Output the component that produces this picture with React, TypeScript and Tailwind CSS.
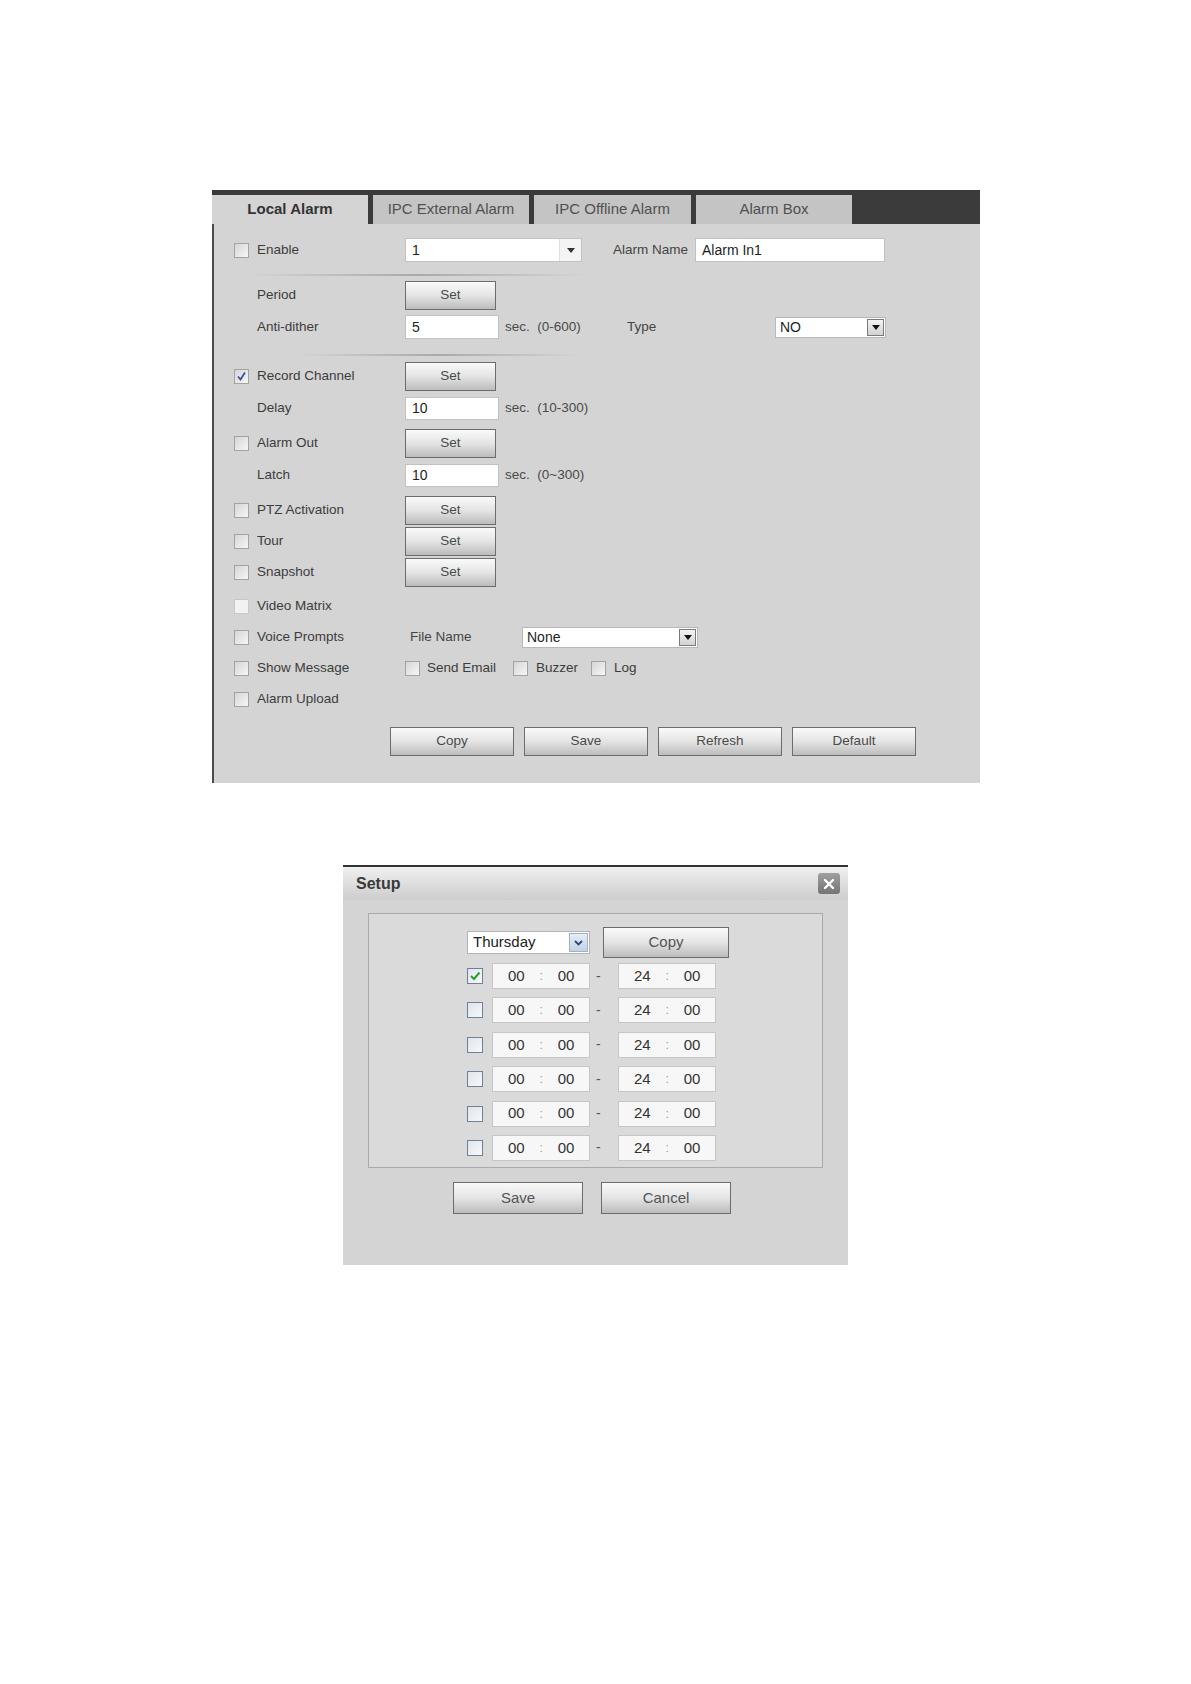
import React from 'react';

const font = { fontFamily: '"Liberation Sans", Arial, sans-serif' };

const Check: React.FC<{ checked?: boolean; light?: boolean }> = ({ checked, light }) => (
  <span
    className={`flex h-[15px] w-[15px] shrink-0 items-center justify-center border ${
      light ? 'border-[#c8c8c8] bg-[#f2f2f2]' : 'border-[#a3a3a3] bg-linear-to-br from-[#d6d6d6] to-[#f6f6f6]'
    }`}
  >
    {checked && (
      <svg width="11" height="11" viewBox="0 0 11 11">
        <path d="M2 5.5 L4.5 8.5 L9 1.5" fill="none" stroke="#3b4c9c" strokeWidth="1.7" />
      </svg>
    )}
  </span>
);

const Btn: React.FC<{ label: string; className?: string }> = ({ label, className = '' }) => (
  <div
    className={`flex items-center justify-center border border-[#6c6c6c] bg-linear-to-b from-[#fafafa] via-[#e4e4e4] to-[#bcbcbc] text-[#4a4a4a] ${className}`}
  >
    {label}
  </div>
);

const Field: React.FC<{ value: string; className?: string }> = ({ value, className = '' }) => (
  <div className={`flex items-center border border-[#c2c2c2] bg-white pl-[6px] text-[14px] text-[#1e1e1e] ${className}`}>
    {value}
  </div>
);

// classic select with a boxed arrow button at the right
const BoxSelect: React.FC<{ value: string; className?: string }> = ({ value, className = '' }) => (
  <div className={`flex items-center justify-between border border-[#b8b8b8] bg-white pl-[4px] text-[14px] text-[#1e1e1e] ${className}`}>
    <span>{value}</span>
    <span className="mr-px flex h-[17px] w-[17px] items-center justify-center border border-[#7a7a7a] bg-linear-to-b from-[#f4f4f4] to-[#d2d2d2]">
      <svg width="8" height="5" viewBox="0 0 8 5">
        <polygon points="0,0 8,0 4,5" fill="#111" />
      </svg>
    </span>
  </div>
);

const Label: React.FC<{ text: string; check?: boolean; checked?: boolean; light?: boolean }> = ({ text, check, checked, light }) => (
  <div className="flex w-[171px] shrink-0 items-center">
    {check ? <Check checked={checked} light={light} /> : <span className="w-[15px]" />}
    <span className="ml-[8px]">{text}</span>
  </div>
);

const Sec: React.FC<{ text: string; className?: string }> = ({ text, className = '' }) => (
  <span className={`ml-[6px] whitespace-pre text-[#4a4a4a] ${className}`}>{text}</span>
);

const tabs = [
  { name: 'Local Alarm', w: 'w-[156px]', active: true },
  { name: 'IPC External Alarm', w: 'w-[156px]' },
  { name: 'IPC Offline Alarm', w: 'w-[157px]' },
  { name: 'Alarm Box', w: 'w-[156px]' },
];

const TimeBox: React.FC<{ h: string }> = ({ h }) => (
  <div className="flex h-[26px] w-[98px] items-center border border-[#c6c6c6] bg-[#f7f7f7] pl-[15px] text-[15px] text-[#333]">
    <span>{h}</span>
    <span className="w-[33px] text-center text-[12px] text-[#9a9a9a]">:</span>
    <span>00</span>
  </div>
);

export default function App() {
  return (
    <div className="h-[1684px] w-[1191px] bg-white pt-[190px]" style={font}>
      {/* main alarm panel */}
      <div className="ml-[212px] w-[768px]">
        <div className="flex h-[34px] gap-[5px] bg-[#3b3b3b] pt-[5px]">
          {tabs.map((t) => (
            <div
              key={t.name}
              className={`flex h-[29px] items-center justify-center text-[15px] ${t.w} ${
                t.active ? 'bg-[#d4d4d4] font-bold text-[#333]' : 'bg-[#c4c4c4] text-[#505050]'
              }`}
            >
              {t.name}
            </div>
          ))}
        </div>

        <div className="h-[559px] border-l-2 border-[#4a4a4a] bg-[#d4d4d4] pl-[20px] text-[13.5px] text-[#3c3c3c]">
          <div className="h-[11px]" />
          <div className="flex h-[30px] items-center">
            <Label text="Enable" check />
            <div className="flex h-[24px] w-[177px] items-center justify-between border border-[#c2c2c2] bg-white pl-[6px] text-[14px] text-[#1e1e1e]">
              <span>1</span>
              <span className="flex h-full w-[22px] items-center justify-center border-l border-[#e0e0e0] bg-[#f4f4f4]">
                <svg width="8" height="5" viewBox="0 0 8 5">
                  <polygon points="0,0 8,0 4,5" fill="#333" />
                </svg>
              </span>
            </div>
            <span className="ml-[31px] w-[82px] text-[#444]">Alarm Name</span>
            <Field value="Alarm In1" className="h-[24px] w-[190px]" />
          </div>

          <div className="ml-[13px] mt-[9px] h-[2px] w-[340px] bg-linear-to-r from-transparent via-[#a9a9a9] to-transparent" />

          <div className="mt-[4px] flex h-[30px] items-center">
            <Label text="Period" />
            <Btn label="Set" className="h-[29px] w-[91px]" />
          </div>
          <div className="mt-[2px] flex h-[30px] items-center">
            <Label text="Anti-dither" />
            <Field value="5" className="h-[24px] w-[94px]" />
            <Sec text="sec.  (0-600)" className="w-[122px]" />
            <span className="w-[148px] text-[#444]">Type</span>
            <BoxSelect value="NO" className="h-[21px] w-[111px]" />
          </div>

          <div className="ml-[64px] mt-[12px] h-[2px] w-[280px] bg-linear-to-r from-transparent via-[#a9a9a9] to-transparent" />

          <div className="mt-[5px] flex h-[30px] items-center">
            <Label text="Record Channel" check checked />
            <Btn label="Set" className="h-[29px] w-[91px]" />
          </div>
          <div className="mt-[2px] flex h-[30px] items-center">
            <Label text="Delay" />
            <Field value="10" className="h-[23px] w-[94px]" />
            <Sec text="sec.  (10-300)" />
          </div>
          <div className="mt-[5px] flex h-[30px] items-center">
            <Label text="Alarm Out" check />
            <Btn label="Set" className="h-[29px] w-[91px]" />
          </div>
          <div className="mt-[2px] flex h-[30px] items-center">
            <Label text="Latch" />
            <Field value="10" className="h-[23px] w-[94px]" />
            <Sec text="sec.  (0~300)" />
          </div>
          <div className="mt-[5px] flex h-[30px] items-center">
            <Label text="PTZ Activation" check />
            <Btn label="Set" className="h-[29px] w-[91px]" />
          </div>
          <div className="mt-[1px] flex h-[30px] items-center">
            <Label text="Tour" check />
            <Btn label="Set" className="h-[29px] w-[91px]" />
          </div>
          <div className="mt-[1px] flex h-[30px] items-center">
            <Label text="Snapshot" check />
            <Btn label="Set" className="h-[29px] w-[91px]" />
          </div>
          <div className="mt-[4px] flex h-[30px] items-center">
            <Label text="Video Matrix" check light />
          </div>
          <div className="mt-[1px] flex h-[30px] items-center">
            <Label text="Voice Prompts" check />
            <span className="w-[117px] pl-[5px] text-[#444]">File Name</span>
            <BoxSelect value="None" className="h-[21px] w-[176px]" />
          </div>
          <div className="mt-[1px] flex h-[30px] items-center">
            <Label text="Show Message" check />
            <div className="flex w-[108px] items-center">
              <Check />
              <span className="ml-[7px]">Send Email</span>
            </div>
            <div className="flex w-[78px] items-center">
              <Check />
              <span className="ml-[8px]">Buzzer</span>
            </div>
            <div className="flex items-center">
              <Check />
              <span className="ml-[8px]">Log</span>
            </div>
          </div>
          <div className="mt-[1px] flex h-[30px] items-center">
            <Label text="Alarm Upload" check />
          </div>

          <div className="ml-[156px] mt-[13px] flex gap-[10px]">
            {['Copy', 'Save', 'Refresh', 'Default'].map((b) => (
              <Btn key={b} label={b} className="h-[29px] w-[124px]" />
            ))}
          </div>
        </div>
      </div>

      {/* Setup dialog */}
      <div className="ml-[343px] mt-[82px] h-[400px] w-[505px] border-t-2 border-[#333] bg-[#d4d4d4]">
        <div className="flex h-[33px] items-center justify-between bg-linear-to-b from-[#f0f0f0] to-[#cdcdcd] pl-[13px] pr-[8px]">
          <span className="text-[16px] font-bold text-[#3a3a3a]">Setup</span>
          <span className="flex h-[21px] w-[22px] items-center justify-center rounded-[3px] bg-linear-to-b from-[#a0a0a0] to-[#747474]">
            <svg width="12" height="12" viewBox="0 0 12 12">
              <path d="M2 2 L10 10 M10 2 L2 10" stroke="#fff" strokeWidth="2.4" strokeLinecap="round" />
            </svg>
          </span>
        </div>

        <div className="ml-[25px] mt-[13px] h-[255px] w-[455px] border border-[#aaaaaa] bg-[#dadada] pl-[98px] pt-[13px]">
          <div className="flex h-[31px] items-center">
            <div className="flex h-[23px] w-[123px] items-center justify-between border border-[#b5b5b5] bg-white pl-[5px] pr-[1px] text-[15px] text-[#222]">
              <span>Thursday</span>
              <span className="flex h-[19px] w-[19px] items-center justify-center border border-[#9fb0c8] bg-linear-to-b from-[#e6edf6] to-[#c4d2e4]">
                <svg width="9" height="6" viewBox="0 0 9 6">
                  <path d="M1 1 L4.5 4.5 L8 1" fill="none" stroke="#2c4a78" strokeWidth="1.8" />
                </svg>
              </span>
            </div>
            <Btn label="Copy" className="ml-[13px] h-[31px] w-[126px] text-[15px] text-[#555]" />
          </div>

          <div className="mt-[5px] flex flex-col gap-[8.4px]">
            {[0, 1, 2, 3, 4, 5].map((i) => (
              <div key={i} className="flex h-[26px] items-center">
                <span className="flex h-[16px] w-[16px] items-center justify-center border border-[#6f8196] bg-linear-to-br from-[#dfe5ec] to-[#f7f9fb]">
                  {i === 0 && (
                    <svg width="12" height="12" viewBox="0 0 12 12">
                      <path d="M2 6 L5 9 L10.5 2.5" fill="none" stroke="#2f9a2f" strokeWidth="2" />
                    </svg>
                  )}
                </span>
                <div className="ml-[9px]">
                  <TimeBox h="00" />
                </div>
                <span className="w-[28px] pl-[6px] text-[14px] text-[#555]">-</span>
                <TimeBox h="24" />
              </div>
            ))}
          </div>
        </div>

        <div className="ml-[110px] mt-[14px] flex gap-[18px]">
          <Btn label="Save" className="h-[32px] w-[130px] text-[15px] text-[#555]" />
          <Btn label="Cancel" className="h-[32px] w-[130px] text-[15px] text-[#555]" />
        </div>
      </div>
    </div>
  );
}
